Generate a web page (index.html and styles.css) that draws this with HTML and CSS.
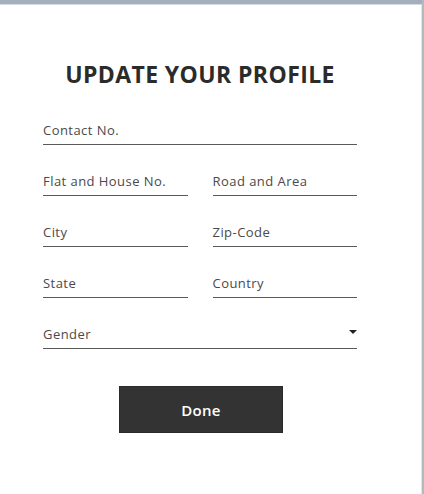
FILE: index.html
```html
<!DOCTYPE html>
<html>
<head>
<meta charset="utf-8">
<link rel="stylesheet" href="styles.css">
</head>
<body>
<div class="window">
  <div class="titlebar"></div>
  <div class="content">
    <h1 class="title">UPDATE YOUR PROFILE</h1>
    <form class="form">
      <div class="field full"><span class="label">Contact No.</span></div>
      <div class="field"><span class="label">Flat and House No.</span></div>
      <div class="field"><span class="label">Road and Area</span></div>
      <div class="field"><span class="label">City</span></div>
      <div class="field"><span class="label">Zip-Code</span></div>
      <div class="field"><span class="label">State</span></div>
      <div class="field"><span class="label">Country</span></div>
      <div class="field full select"><span class="label">Gender</span><span class="caret"></span></div>
    </form>
    <div class="actions"><button class="done" type="button">Done</button></div>
  </div>
</div>
</body>
</html>
```
FILE: styles.css
```css
html, body {
  margin: 0;
  padding: 0;
  background: #ffffff;
}
.window {
  width: 424px;
  height: 494px;
  box-sizing: border-box;
  border-right: 2px solid #b3babe;
  display: flex;
  flex-direction: column;
  font-family: "Open Sans", "Liberation Sans", sans-serif;
}
.titlebar {
  height: 4px;
  background: #a3afba;
  border-bottom: 1px solid #d3dce2;
  flex: none;
}
.content {
  flex: 1;
  border-right: 1px solid #e2e6e8;
  padding-left: 43px;
}
.title {
  width: 314px;
  margin: 54px 0 0 0;
  text-align: center;
  font-family: "Open Sans", sans-serif;
  font-weight: 700;
  font-size: 23px;
  line-height: 30px;
  color: #2b2b2b;
  letter-spacing: 0.4px;
}
.form {
  width: 314px;
  margin: 0;
  margin-top: 33px;
  display: grid;
  grid-template-columns: 1fr 1fr;
  column-gap: 25px;
  row-gap: 28px;
}
.field {
  display: flex;
  align-items: center;
  justify-content: space-between;
  height: 16px;
  padding-bottom: 6px;
  border-bottom: 1px solid #5a5a5a;
}
.full {
  grid-column: 1 / 3;
}
.label {
  font-size: 13px;
  line-height: 16px;
  color: #4a4a4a;
  letter-spacing: 0.45px;
}
.caret {
  width: 0;
  height: 0;
  border-left: 4px solid transparent;
  border-right: 4px solid transparent;
  border-top: 4px solid #222;
  margin-right: 0;
  margin-bottom: 4px;
}
.actions {
  width: 314px;
  margin-top: 37px;
  display: flex;
  justify-content: center;
}
.done {
  width: 164px;
  height: 47px;
  margin-left: 2px;
  background: #333333;
  border: 1px solid #2a2a2a;
  color: #ffffff;
  font-family: "Open Sans", sans-serif;
  font-weight: 600;
  font-size: 15px;
  letter-spacing: 0.3px;
  padding: 0;
}
```
